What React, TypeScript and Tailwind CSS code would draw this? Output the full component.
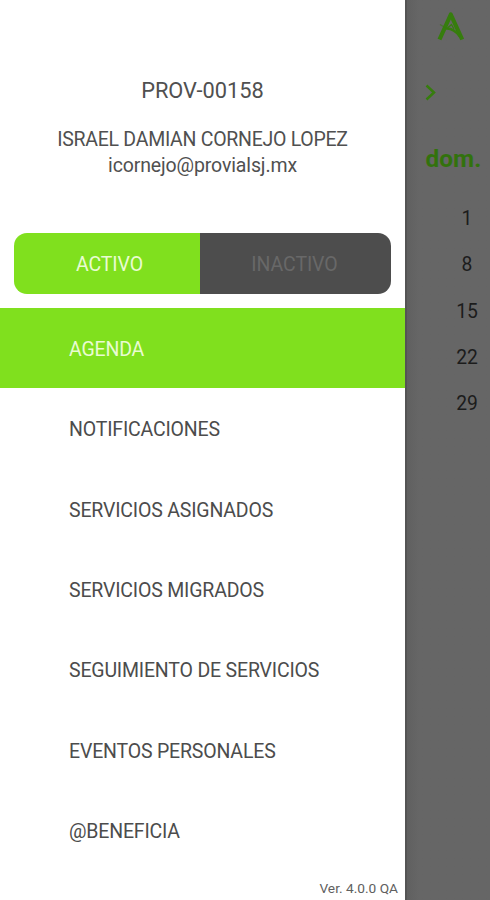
const menuItems = [
  'AGENDA',
  'NOTIFICACIONES',
  'SERVICIOS ASIGNADOS',
  'SERVICIOS MIGRADOS',
  'SEGUIMIENTO DE SERVICIOS',
  'EVENTOS PERSONALES',
  '@BENEFICIA',
];

const sundays = [1, 8, 15, 22, 29];

function Profile() {
  return (
    <header className="flex h-[233px] flex-col items-center pt-[77px] text-[#505050]">
      <p className="text-[21.8px] leading-7">PROV-00158</p>
      <p className="mt-[22px] text-[19.5px] leading-[26px] tracking-[-0.27px]">ISRAEL DAMIAN CORNEJO LOPEZ</p>
      <p className="text-[19.5px] leading-[26px] tracking-[-0.13px]">icornejo@provialsj.mx</p>
    </header>
  );
}

function StatusToggle() {
  return (
    <div className="ml-[14px] flex h-[61px] w-[377px] overflow-hidden rounded-[13px] text-[19.5px] tracking-[-0.1px]">
      <button className="w-[186px] bg-[#80e01e] pt-[3px] pl-[5px] text-[#e9fbd2]">ACTIVO</button>
      <button className="flex-1 bg-[#4d4d4d] pt-[3px] pr-[2px] text-[#686868]">INACTIVO</button>
    </div>
  );
}

function Menu() {
  return (
    <nav className="mt-[14px] flex flex-col text-[19.5px] tracking-[-0.18px] text-[#4c4c4c]">
      {menuItems.map((item, i) => (
        <a
          key={item}
          className={`flex h-[80.4px] items-center pl-[69px] pt-[2.5px] ${i === 0 ? 'bg-[#80e01e] text-[#e9fbd2]' : ''}`}
        >
          {item}
        </a>
      ))}
    </nav>
  );
}

function Calendar() {
  return (
    <section className="flex flex-1 flex-col border-l-2 border-[#545454] bg-linear-to-r from-[#606060] to-[#666666] to-[12px]">
      <svg className="mt-[11px] ml-[30px]" width="28" height="30" viewBox="0 0 28 30" fill="none" stroke="#367d0d">
        <path d="M2.5 28.5 13.8 3.5 25.2 28.5" strokeWidth="4.2" strokeLinejoin="round" />
        <path d="M3 13.5 8 16.5" strokeWidth="1.3" opacity="0.6" />
        <path d="M9 17.5C15 17 19 20 23 25.5" strokeWidth="2.6" />
        <path d="M10.5 17 14.5 13.5 17 18" strokeWidth="1.4" />
      </svg>
      <svg className="mt-[43px] ml-[18px]" width="12" height="17" viewBox="0 0 12 17" fill="none" stroke="#367d0d" strokeWidth="2.5">
        <path d="M1.5 1.5 9 8.5 1.5 15.5" />
      </svg>
      <h2 className="mt-[42px] ml-[18.5px] text-[24.4px] leading-8 font-bold text-[#32720d]">dom.</h2>
      <div className="mt-[21px] ml-9 flex w-12 flex-col text-center text-[19.3px] text-[#1c1c1c]">
        {sundays.map((day) => (
          <span key={day} className="h-[46.3px] leading-[46.3px]">{day}</span>
        ))}
      </div>
    </section>
  );
}

export default function App() {
  return (
    <main className="flex h-[900px] w-[490px] overflow-hidden bg-white font-[Roboto,sans-serif]">
      <aside className="flex w-[405px] shrink-0 flex-col bg-white">
        <Profile />
        <StatusToggle />
        <Menu />
        <p className="mt-[9px] pr-[7px] text-right text-[13.7px] leading-4 text-[#606060]">Ver. 4.0.0 QA</p>
      </aside>
      <Calendar />
    </main>
  );
}
